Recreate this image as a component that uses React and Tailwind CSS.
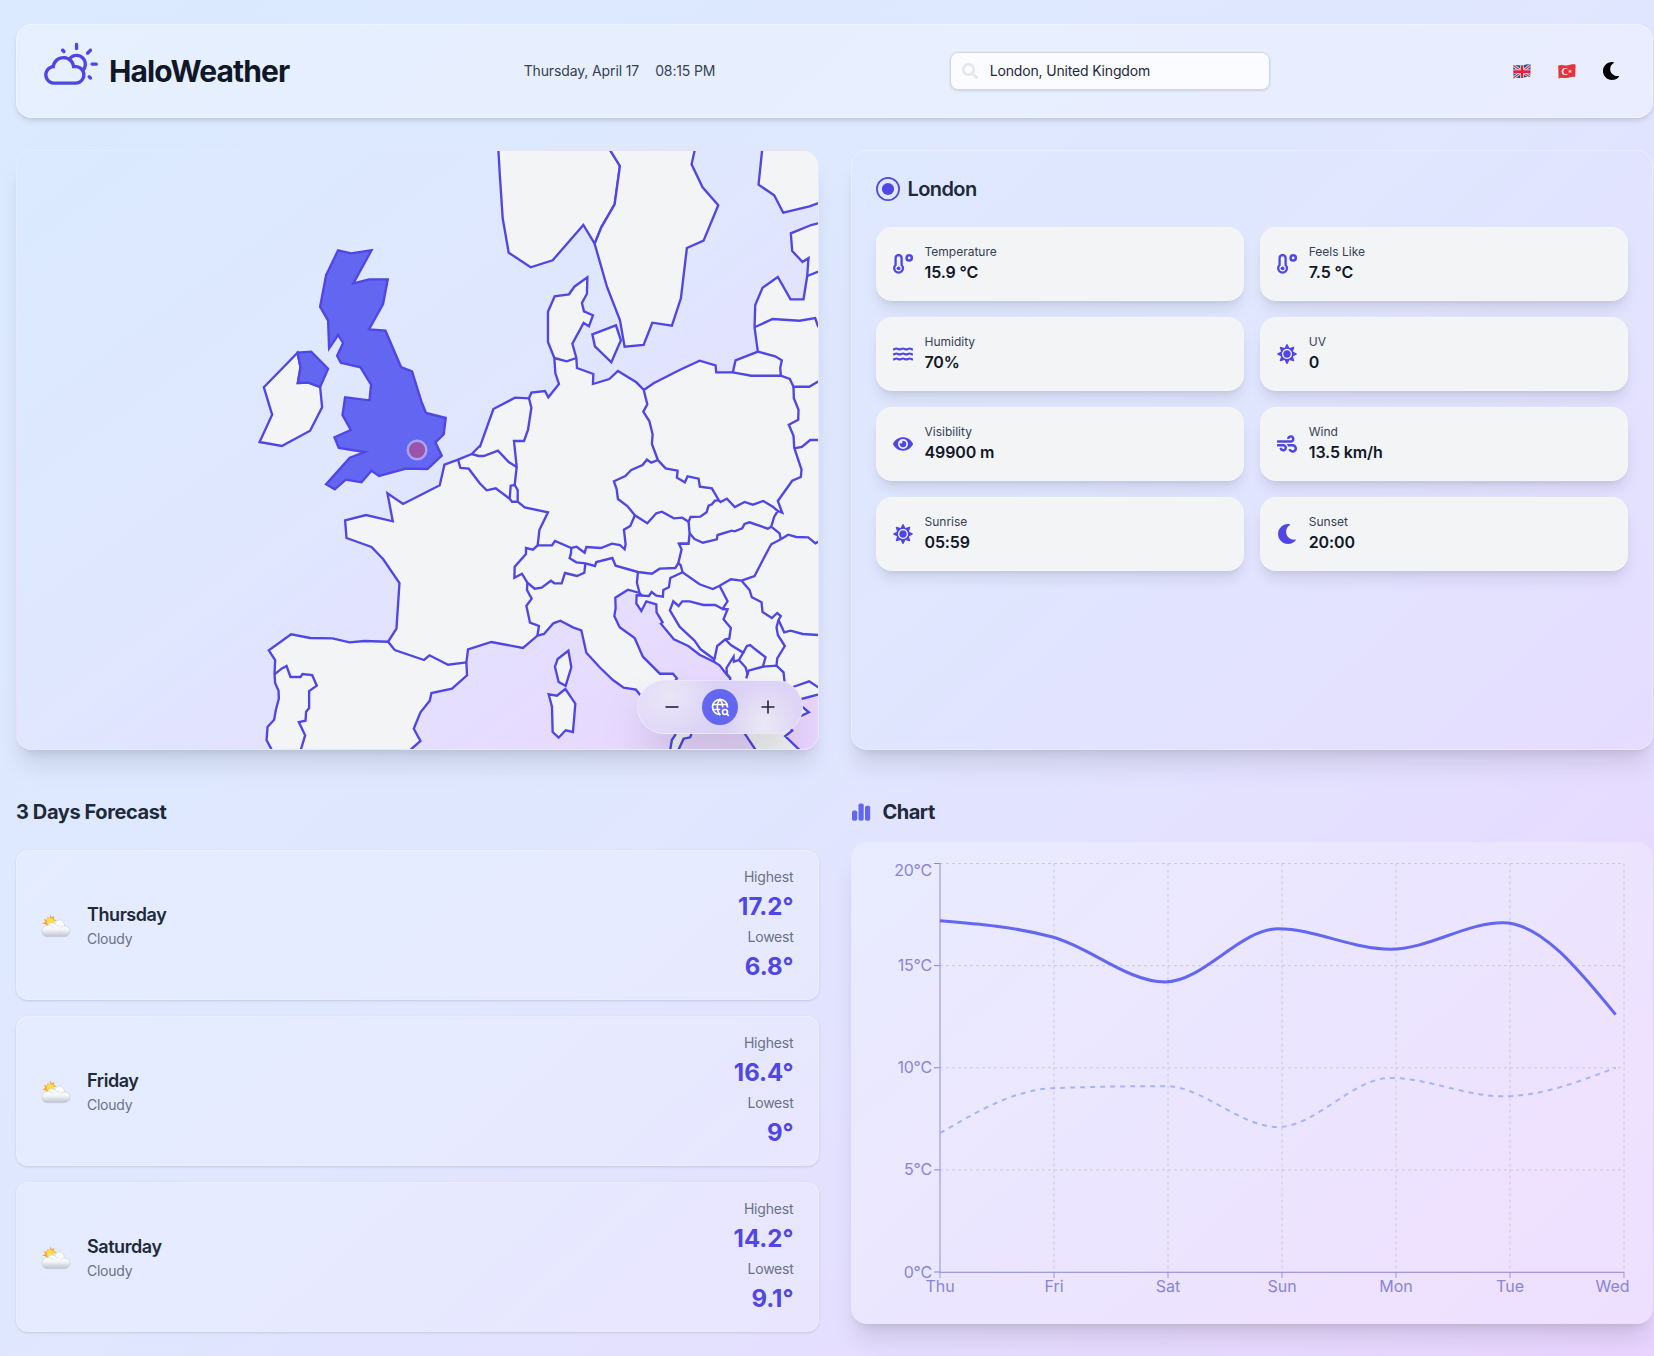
import React from "react";
import { WiDayCloudy } from "react-icons/wi";
import { FaMoon, FaSun, FaEye, FaWind, FaSearch } from "react-icons/fa";
import { TbWorldSearch } from "react-icons/tb";

/* ---------- Map geometry: tiles with an origin, points in thirds of a pixel ---------- */
const tile = (ox, oy) => (s) =>
  s
    .split(" ")
    .map((p) => {
      const [x, y] = p.split(",").map(Number);
      return `${(ox + x / 3).toFixed(1)},${(oy + y / 3).toFixed(1)}`;
    })
    .join(" ");

const isles = tile(240, 230);
const north = tile(480, 140);
const center = tile(480, 370);
const south = tile(500, 540);
const west = tile(250, 480);

const mainland = [
  north("1030,247 995,255 934,280 938,333 969,366 987,354 983,408 972,478 933,478 895,411 849,443 827,495 825,562 835,635 768,661 760,697 710,697 708,676 660,662 600,690 522,730 493,750 470,727 415,693 389,717 340,732 341,702 292,684 290,654 278,611 312,549 328,559 340,526 313,514 307,489 322,461 323,412 284,440 268,463 225,469 205,515 205,606 224,654 227,700 238,732 206,772 196,753 155,758 148,775 106,773"),
  center("41,117 0,232"),
  isles("720,648 696,672 655,689 614,704 600,766 490,822 443,790"),
  west("429,124 349,105 286,121 290,174 365,201 400,237 449,309 440,446 415,485 344,483 299,487 248,475 181,474 124,463 57,511 76,540 74,583 76,609 86,632 87,656 78,690 73,719 53,741 50,780 64,806 70,840 450,840 486,806 512,783 492,746 512,697 540,662 545,639 607,626 652,586 650,547 655,508 725,486 820,504 863,467"),
  south("133,282 161,250 182,242 220,262 245,271 260,338 300,382 340,420 372,443 409,449 430,475 480,515 525,560 527,585 517,600 510,640 532,640 552,596 572,592 575,582 570,555 545,530 560,500 620,510 630,490 580,450 525,425 532,415 520,401 481,401 430,350 405,294 360,262 344,228 348,205 347,173 385,149 418,158 425,164 411,166 410,190 425,213 440,184 470,193 471,217 489,247 484,251 523,298 566,318 600,344 643,365 660,376 680,402 692,415 690,480 700,530 737,583 775,640 910,640 900,630 857,588 878,572 850,540 860,520 905,527 928,517 905,498 890,478 905,477 955,464 980,460 980,100"),
].join(" ");

const land = [
  mainland,
  north("55,10 60,100 69,235 87,338 153,382 219,361 311,255 345,311 365,262 405,193 421,78 393,33 380,10"),
  north("380,10 393,33 421,78 405,193 365,262 345,311 382,440 421,540 435,620 492,615 518,548 577,557 604,475 622,324 672,302 716,196 669,142 636,73 650,10"),
  north("850,10 837,134 884,166 911,218 990,199 1030,185 1030,10"),
  north("338,583 409,556 424,601 395,667 346,619"),
  south("206,332 215,382 198,437 177,426 166,380 174,357"),
  south("197,447 227,491 220,576 198,571 177,593 159,576 157,500 147,463 172,467"),
  isles("173,368 72,472 97,554 59,636 126,648 211,602 247,532 241,471 206,458 174,459 182,412"),
];

const selected = [
  isles("295,61 334,70 395,61 341,160 388,148 444,148 430,222 388,298 437,302 484,411 517,424 545,515 559,549 618,564 612,613 587,637 606,677 563,717 499,716 418,738 395,722 365,757 318,749 285,778 259,763 330,683 375,666 297,654 284,622 333,600 308,555 316,502 389,511 394,464 362,412 303,398 292,377 310,339 295,315 268,355 265,272 241,230 259,135"),
  isles("173,368 214,365 265,416 241,471 206,458 174,459 182,412"),
];

const borders = [
  west("74,583 95,566 110,558 122,591 152,591 158,582 187,585 201,617 178,633 178,684 169,695 167,722 147,726 166,766 150,820"),
  west("415,485 435,510 523,540 539,526 595,554 650,547"),
  north("983,408 1030,390"),
  north("825,562 879,537 960,542 1007,534 1014,555 1025,575"),
  north("224,654 261,664 290,654"),
  north("835,635 887,649 907,661 902,684 904,707"),
  north("760,697 815,707 904,707 931,717 942,740 989,740 1030,717"),
  center("942,50 943,85 957,119 956,149 928,164 942,197 944,233 966,299 964,321 938,332 895,393 908,428 895,423"),
  center("944,235 967,231 992,210 1030,210"),
  center("493,62 503,103 491,125 509,153 519,193 517,222 535,270 558,295 594,302 592,323 616,337 624,319 657,326 661,350 697,355 718,391 723,396 742,386 766,411 795,396 820,404 851,393 880,410 895,423 884,440 875,470 900,490 904,508"),
  center("535,270 515,278 502,269 489,285 455,300 437,318 403,334 411,357 415,387 443,408 466,436 503,460 530,430 547,425 583,445 608,443 627,455 633,441 662,440 681,427 687,407 697,403 706,392 718,391"),
  center("466,436 452,468 433,479 438,523 435,538 421,525 397,521 364,534 320,531 315,548 291,530 275,534 226,513 217,526 174,526 179,480 205,427 135,412 114,395 97,395 90,386 93,347 105,345 114,360 114,395"),
  center("105,345 111,291 103,213 133,213 145,180 155,113 148,85"),
  center("111,291 87,276 55,242 12,258 -3,258 -24,252"),
  center("627,455 630,490 627,521 598,521"),
  isles("655,689 662,714 687,716 720,760 741,781 768,775 810,806"),
  south("114,16 100,29 79,24 79,42 45,80 44,113 67,101 83,128 105,146 126,143 154,122 164,130 186,130 196,99 232,108 254,98 257,70"),
  south("215,24 214,40 210,55 230,67 257,70 286,78 290,66 338,54 348,77 415,96 457,101 480,86 527,84 536,70 543,75 549,97"),
  south("536,70 546,28 538,11 567,11"),
  center("630,490 645,507 670,518 712,508 714,495 757,482 765,484 788,475 795,462 810,457 865,476 875,470"),
  center("904,508 875,523 850,570 825,618 786,632"),
  center("904,508 926,494 950,501 986,502 1008,520 1030,508"),
  south("83,128 82,150 96,176 80,197 91,248 118,258 113,287"),
  south("415,96 412,128 420,160"),
  south("411,166 448,168 456,156 470,167 490,170 491,150 508,142 512,114 549,97 600,133 640,147 660,137 694,118 726,122"),
  south("660,137 684,184 669,207 647,195 612,195 570,184 548,184 537,198 521,184 511,211 540,260 585,302 603,328 643,357"),
  south("643,365 653,318 677,298 689,296 694,264 672,238 684,208 669,207"),
  south("677,298 694,315 731,338 718,360 703,365 702,350 681,384 682,402 692,415"),
  south("731,338 742,318 752,315 767,328 798,352 790,380 747,392 740,415"),
  south("718,360 738,382 745,405"),
  south("790,380 831,377 852,397 855,425"),
  south("726,122 750,150 757,172 786,187 789,216 817,234 833,219 844,228 837,240 831,262 835,285 856,318 833,355 831,377"),
  south("837,240 854,277 873,272 910,282 970,286"),
  south("880,441 929,424 955,441 970,448"),
];

function EuropeMap() {
  return (
    <svg className="block h-full w-full" viewBox="17 151 801 598" preserveAspectRatio="none" stroke="#4f46e5" strokeWidth="2.35" strokeLinejoin="miter">
      {land.map((p, i) => (
        <polygon key={i} points={p} fill="#f3f4f6" />
      ))}
      {borders.map((p, i) => (
        <polyline key={i} points={p} fill="none" />
      ))}
      {selected.map((p, i) => (
        <polygon key={i} points={p} fill="#6366f1" />
      ))}
      <circle cx="417.3" cy="450" r="9.3" fill="#9d54a8" stroke="#a5a6f6" strokeWidth="2.4" />
    </svg>
  );
}

/* ---------- Icons ---------- */
function ThermoIcon() {
  return (
    <svg className="size-5" viewBox="0 0 20 20" fill="none" stroke="currentColor" strokeWidth="2.3">
      <path d="M2.6 11V4a3 3 0 0 1 6 0V11a4.4 4.4 0 1 1-6 0Z" />
      <circle cx="5.6" cy="14.3" r="1.9" fill="currentColor" stroke="none" />
      <circle cx="16.2" cy="3.9" r="2.6" strokeWidth="2.5" />
    </svg>
  );
}

function WavesIcon() {
  return (
    <svg className="size-5" viewBox="0 0 20 20" fill="none" stroke="currentColor" strokeWidth="2.1">
      {[5, 10, 15].map((y) => (
        <path key={y} d={`M.1 ${y + 0.4}C1.4 ${y + 0.4} 2 ${y - 0.5} 3.3 ${y - 0.5}S5.4 ${y + 0.4} 6.7 ${y + 0.4} 8.7 ${y - 0.5} 10 ${y - 0.5}s2 .9 3.3 .9S15.4 ${y - 0.5} 16.7 ${y - 0.5} 18.6 ${y + 0.4} 19.9 ${y + 0.4}`} />
      ))}
    </svg>
  );
}

function TargetIcon() {
  return (
    <svg className="size-6" viewBox="0 0 24 24" fill="none" stroke="#4f46e5">
      <circle cx="12" cy="12" r="11.1" strokeWidth="1.7" />
      <circle cx="12" cy="12" r="6.1" fill="#4f46e5" stroke="none" />
    </svg>
  );
}

function BarsIcon() {
  return (
    <svg className="size-5" viewBox="0 0 20 20" fill="#6366f1">
      <rect x="1" y="8.4" width="5.2" height="10.4" rx="1.8" />
      <rect x="7.5" y="1.4" width="5.2" height="17.4" rx="1.8" />
      <rect x="14" y="3.8" width="5.2" height="15" rx="1.8" />
    </svg>
  );
}

function UkFlag() {
  return (
    <svg className="h-[17px] w-[20px]" viewBox="0 0 20 17">
      <defs>
        <clipPath id="uk"><path d="M1.2 2.6C4 1 7 3 10 2.4S16 .6 18.6 1.6L18.2 14C15 13 12.5 14.6 10 15S4 14 1.6 15.6Z" /></clipPath>
      </defs>
      <g clipPath="url(#uk)">
        <rect width="20" height="17" fill="#2b4a94" />
        <path d="M0 1.5 20 15.5M20 1 0 16" stroke="#f0eff8" strokeWidth="2.8" />
        <path d="M0 1.5 20 15.5M20 1 0 16" stroke="#d8283c" strokeWidth="1.2" />
        <path d="M10 0v17M0 8.6h20" stroke="#f0eff8" strokeWidth="4" />
        <path d="M10 0v17M0 8.6h20" stroke="#dc2539" strokeWidth="2.6" />
      </g>
    </svg>
  );
}

function TrFlag() {
  return (
    <svg className="h-[17px] w-[20px]" viewBox="0 0 20 17">
      <path d="M1.2 2.6C4 1 7 3 10 2.4S16 .6 18.6 1.6L18.2 14C15 13 12.5 14.6 10 15S4 14 1.6 15.6Z" fill="#e5323c" />
      <circle cx="8.1" cy="8.5" r="3.5" fill="#fbe9ec" />
      <circle cx="9.1" cy="8.4" r="2.7" fill="#e5323c" />
      <path d="m11.2 8.4 1.3-.5v-1.3l.9 1 1.3-.4-.7 1.2.7 1.2-1.3-.3-.9 1v-1.4Z" fill="#fff" />
    </svg>
  );
}

function CloudyIcon() {
  return (
    <svg className="h-9 w-[30px]" viewBox="0 0 30 36">
      <defs>
        <linearGradient id="cl" x1="0" y1="0" x2="0" y2="1">
          <stop offset="0" stopColor="#ffffff" />
          <stop offset=".55" stopColor="#f6f7f9" />
          <stop offset="1" stopColor="#bcc3ce" />
        </linearGradient>
      </defs>
      <path d="m9.500 7.200 1.100 3 3-1.200-1 2.900 3 1.300-3 1.300.6 3.500-9 2.500.9-3.100-3.900-.8 3-1.700-1.200-2.900 3 .7.700-3 1.800 2Z" fill="#f4a340" />
      <circle cx="9.3" cy="14.6" r="3.7" fill="#fde047" />
      <path d="M7 18.2c1-2.500 4.500-3.300 6.800-1.200 1-4.700 7.600-5.800 9.300-.6.300.9.400 1.700.2 2.500 4 .2 6.200 3 5.700 6.200-.5 2.800-3 4.700-6 4.700H6.800C3.200 29.800 1 27.500 1 24.400c0-3.300 2.700-6.100 6-6.200Z" fill="url(#cl)" stroke="#c6cbd6" strokeWidth=".6" />
      <path d="M7 18.200c2.500-.2 4.300.8 5.300 2.700M13.800 17c1 1.800 2.700 2.200 4.400 1.500M19 21.500c1-1.700 2.600-2.600 4.300-2.600" fill="none" stroke="#d5d8df" strokeWidth=".7" />
    </svg>
  );
}

/* ---------- Data ---------- */
const metrics = [
  ["Temperature", "15.9 °C", <ThermoIcon />],
  ["Feels Like", "7.5 °C", <ThermoIcon />],
  ["Humidity", "70%", <WavesIcon />],
  ["UV", "0", <FaSun size={20} />],
  ["Visibility", "49900 m", <FaEye size={20} />],
  ["Wind", "13.5 km/h", <FaWind size={20} />],
  ["Sunrise", "05:59", <FaSun size={20} />],
  ["Sunset", "20:00", <FaMoon size={20} />],
];

const forecast = [
  ["Thursday", "17.2°", "6.8°"],
  ["Friday", "16.4°", "9°"],
  ["Saturday", "14.2°", "9.1°"],
];

const highs = [17.2, 16.4, 14.2, 16.8, 15.8, 17.1, 12.6];
const lows = [6.8, 9, 9.1, 7.1, 9.5, 8.6, 10];
const days = ["Thu", "Fri", "Sat", "Sun", "Mon", "Tue", "Wed"];

/* ---------- Chart ---------- */
const X0 = 89;
const Y0 = 430;
const PLOT_W = 684;
const PLOT_H = 408.5;
const STEP = 112.6;

/* Monotone cubic interpolation through equally spaced points. */
function monotone(values) {
  const pts = values.map((v, i) => [X0 + i * STEP, Y0 - (v * PLOT_H) / 20]);
  const d = pts.slice(1).map((p, i) => (p[1] - pts[i][1]) / STEP);
  const m = pts.map((_, i) => {
    if (i === 0 || i === pts.length - 1) return 0;
    const a = d[i - 1];
    const b = d[i];
    return (Math.sign(a) + Math.sign(b)) * Math.min(Math.abs(a), Math.abs(b), 0.25 * Math.abs(a + b));
  });
  const last = pts.length - 1;
  m[0] = (3 * d[0] - m[1]) / 2;
  m[last] = (3 * d[last - 1] - m[last - 1]) / 2;
  let path = `M${pts[0][0]},${pts[0][1]}`;
  for (let i = 0; i < last; i++) {
    const h = STEP / 3;
    path += `C${pts[i][0] + h},${pts[i][1] + h * m[i]} ${pts[i + 1][0] - h},${pts[i + 1][1] - h * m[i + 1]} ${pts[i + 1][0]},${pts[i + 1][1]}`;
  }
  return path;
}

function Chart() {
  const xs = days.map((_, i) => X0 + (i * PLOT_W) / 6);
  const ys = [0, 5, 10, 15, 20].map((v) => [v, Y0 - (v * PLOT_H) / 20]);
  return (
    <svg className="block h-[482px] w-full" viewBox="0 0 802.5 482" fontSize="16" fill="none">
      <g stroke="#cccccc" strokeDasharray="3 3">
        {ys.slice(1).map(([v, y]) => (
          <line key={v} x1={X0} x2={X0 + PLOT_W} y1={y} y2={y} />
        ))}
        {xs.slice(1).map((x) => (
          <line key={x} x1={x} x2={x} y1={Y0 - PLOT_H} y2={Y0} />
        ))}
      </g>
      <g stroke="#8884d8">
        <path d={`M${X0} ${Y0 - PLOT_H}V${Y0}`} opacity=".9" />
        <path d={`M${X0} ${Y0 + 0.25}H${X0 + PLOT_W}`} />
        {ys.map(([v, y]) => (
          <path key={v} d={`M${X0 - 6} ${y}h6`} />
        ))}
        {xs.map((x) => (
          <path key={x} d={`M${x} ${Y0}v6`} opacity=".8" />
        ))}
      </g>
      <g fill="#8884d8">
        {ys.map(([v, y]) => (
          <text key={v} x="81" y={v === 20 ? y + 12 : y + 5.5} textAnchor="end" letterSpacing="-0.2">{`${v}°C`}</text>
        ))}
        {days.map((d, i) => (
          <text key={d} x={i === 6 ? 761.5 : xs[i]} y="449.5" textAnchor="middle">{d}</text>
        ))}
      </g>
      <path d={monotone(lows)} stroke="#a5b4fc" strokeWidth="2" strokeDasharray="5 5" />
      <path d={monotone(highs)} stroke="#6366f1" strokeWidth="3" />
    </svg>
  );
}

/* ---------- Page ---------- */
export default function App() {
  return (
    <div
      className="h-[1356px] w-[1654px] overflow-hidden bg-linear-138 from-blue-100 via-indigo-100 to-purple-200 pt-6 pl-4 text-gray-900"
      style={{ fontFamily: 'Inter, "Noto Sans", sans-serif' }}
    >
      <div className="w-[1637px]">
        <header className="flex h-[94px] items-center justify-between rounded-2xl border border-white/30 bg-white/30 px-6 shadow-md">
          <div className="flex items-center gap-2 text-[#4f46e5]">
            <WiDayCloudy size={60} />
            <h1 className="text-3xl font-bold tracking-[-0.029em] text-gray-900">HaloWeather</h1>
          </div>
          <div className="flex gap-4 text-sm tracking-[-0.009em] text-gray-700">
            <span>Thursday, April 17</span>
            <span>08:15 PM</span>
          </div>
          <div className="flex h-[38px] w-80 items-center rounded-lg border border-gray-300 bg-white/80 pl-[11px] text-sm tracking-[-0.012em] text-gray-800 shadow-sm">
            <FaSearch size={16} className="mr-3 text-gray-200" />
            London, United Kingdom
          </div>
          <div className="flex items-center gap-[25px] px-2">
            <UkFlag />
            <TrFlag />
            <FaMoon size={18} className="text-black" />
          </div>
        </header>

        <main className="mt-8 grid grid-cols-2 gap-8">
          <section className="relative h-[600px] overflow-hidden rounded-2xl border border-white/20 bg-linear-to-br from-blue-100 via-indigo-100 to-purple-200 shadow-xl">
            <EuropeMap />
            <div className="absolute right-[15px] bottom-[15px] flex items-center gap-3 rounded-full border border-white/40 bg-[#ddd4f6] bg-[radial-gradient(ellipse_44px_38px_at_20%_30%,#e9e6f6,transparent),radial-gradient(ellipse_36px_44px_at_77%_85%,#ebe9f4,transparent),linear-gradient(90deg,#e3dafa,#dad2f6_50%,#ded4f5)] px-4 py-2 text-gray-800 shadow-2xl">
              <button className="grid size-9 place-items-center">
                <svg className="size-5" viewBox="0 0 20 20" stroke="currentColor" strokeWidth="1.6"><path d="M3.5 10h13" /></svg>
              </button>
              <button className="grid size-9 place-items-center rounded-full bg-[#6366f1] text-white">
                <TbWorldSearch size={20} />
              </button>
              <button className="grid size-9 place-items-center">
                <svg className="size-5" viewBox="0 0 20 20" stroke="currentColor" strokeWidth="1.6"><path d="M3.5 10h13M10 3.5v13" /></svg>
              </button>
            </div>
          </section>

          <section className="h-[600px] rounded-2xl border border-white/30 p-6 shadow-xl">
            <div className="flex items-center gap-2">
              <TargetIcon />
              <h2 className="text-xl font-semibold tracking-[-0.03em] text-gray-800">London</h2>
            </div>
            <div className="mt-6 grid grid-cols-2 gap-4">
              {metrics.map(([label, value, icon]) => (
                <div key={label} className="flex items-center gap-3 rounded-2xl border border-white/20 bg-gray-100 p-4 shadow-lg">
                  <span className="text-[#4f46e5]">{icon}</span>
                  <div>
                    <p className="text-xs text-gray-700">{label}</p>
                    <p className="text-base font-semibold tracking-[-0.008em] text-gray-900">{value}</p>
                  </div>
                </div>
              ))}
            </div>
          </section>
        </main>

        <div className="mt-12 grid grid-cols-2 gap-8">
          <section>
            <h2 className="text-xl font-bold tracking-[-0.02em] text-gray-800">3 Days Forecast</h2>
            <div className="mt-6 flex flex-col gap-4">
              {forecast.map(([day, high, low]) => (
                <div key={day} className="flex items-center justify-between rounded-xl border border-white/20 bg-white/20 px-6 py-4 shadow-sm">
                  <div className="flex items-center gap-4">
                    <CloudyIcon />
                    <div>
                      <p className="text-lg font-semibold tracking-[-0.024em] text-gray-800">{day}</p>
                      <p className="text-sm tracking-[-0.018em] text-gray-500">Cloudy</p>
                    </div>
                  </div>
                  <div className="flex flex-col items-end gap-1">
                    <p className="text-sm tracking-[-0.012em] text-gray-500">Highest</p>
                    <p className="text-2xl font-bold text-[#4f46e5]">{high}</p>
                    <p className="text-sm tracking-[-0.018em] text-gray-500">Lowest</p>
                    <p className="text-2xl font-bold text-[#4f46e5]">{low}</p>
                  </div>
                </div>
              ))}
            </div>
          </section>

          <section>
            <div className="flex items-center gap-3">
              <BarsIcon />
              <h2 className="text-xl font-bold tracking-[-0.025em] text-gray-800">Chart</h2>
            </div>
            <div className="mt-4 h-[482px] rounded-2xl bg-white/25 shadow-xl">
              <Chart />
            </div>
          </section>
        </div>
      </div>
    </div>
  );
}
